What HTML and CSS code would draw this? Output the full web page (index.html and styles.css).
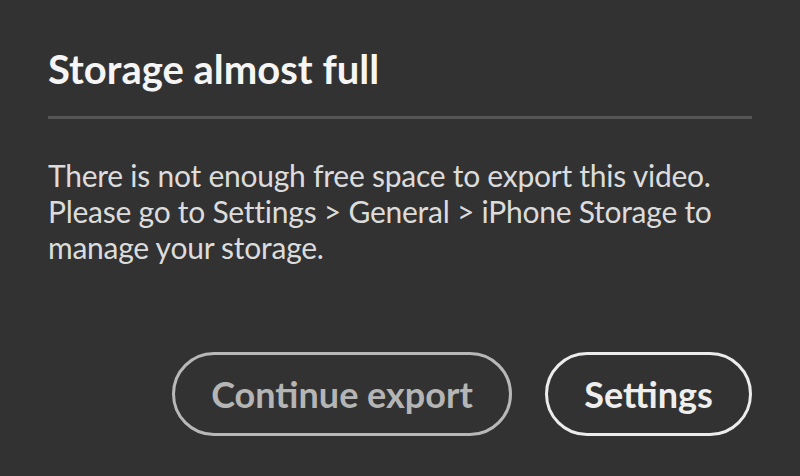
FILE: index.html
```html
<!DOCTYPE html>
<html>
<head>
<meta charset="utf-8">
<link rel="stylesheet" href="styles.css">
</head>
<body>
<div class="dialog">
  <h1 class="title">Storage almost full</h1>
  <div class="divider"></div>
  <p class="message">There is not enough free space to export this video. Please go to Settings &gt; General &gt; iPhone Storage to manage your storage.</p>
  <div class="actions">
    <button class="btn btn-secondary">Continue export</button>
    <button class="btn btn-primary">Settings</button>
  </div>
</div>
</body>
</html>
```
FILE: styles.css
```css
html, body {
  margin: 0;
  padding: 0;
  background: #323232;
  height: 100%;
}
.dialog {
  width: 800px;
  height: 476px;
  box-sizing: border-box;
  padding: 46px 48px 0 48px;
  font-family: Lato, "Open Sans", sans-serif;
  display: flex;
  flex-direction: column;
}
.title {
  margin: 0;
  font-size: 40px;
  line-height: 46px;
  font-weight: 700;
  color: #f5f5f5;
  letter-spacing: 0;
}
.divider {
  height: 3px;
  background: #555555;
  margin-top: 24px;
}
.message {
  margin: 38px 0 0 0;
  font-size: 30px;
  line-height: 36px;
  color: #dcdcdc;
  letter-spacing: -0.25px;
  width: 690px;
}
.actions {
  display: flex;
  justify-content: flex-end;
  gap: 33px;
  margin-top: 87px;
}
.btn {
  height: 84px;
  box-sizing: border-box;
  border-radius: 42px;
  background: transparent;
  border: 3px solid;
  font-family: Lato, "Open Sans", sans-serif;
  font-size: 36px;
  font-weight: 700;
  padding: 0;
  letter-spacing: 0;
}
.btn-secondary {
  width: 340px;
  border-color: #b8b8b8;
  color: #b5b5b5;
}
.btn-primary {
  width: 207px;
  border-color: #ececec;
  color: #eeeeee;
}
```
